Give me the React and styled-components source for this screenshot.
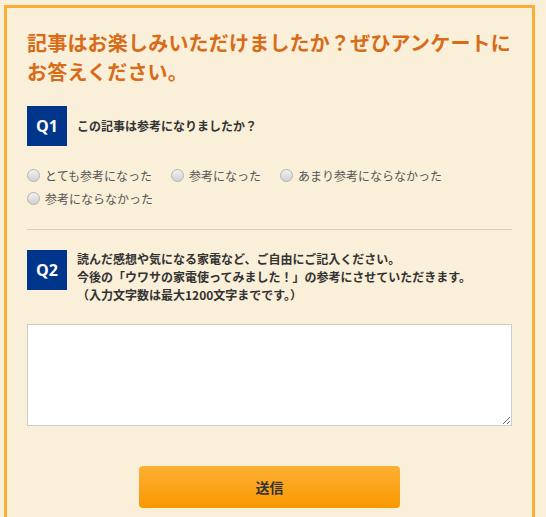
import React from "react";
import styled, { createGlobalStyle } from "styled-components";

const GlobalStyle = createGlobalStyle`
  html, body {
    margin: 0;
    padding: 0;
    background: #faefd8;
  }
  body {
    font-family: "Noto Sans CJK JP", "Noto Sans", sans-serif;
    color: #333;
  }
`;

const Page = styled.div`
  padding: 5px 0 0 4px;
`;

const Card = styled.div`
  width: 485px;
  border: 3px solid #fbad36;
  border-bottom: none;
  padding: 20px 20px 30px;
  background: #faefd8;
`;

const Title = styled.h2`
  margin: 0;
  font-size: 20px;
  line-height: 29px;
  font-weight: 700;
  color: #d86b17;
  letter-spacing: 0.2px;
`;

const QuestionRow = styled.div`
  display: flex;
  align-items: ${(p) => (p.$top ? "flex-start" : "center")};
  gap: 10px;
  margin-top: ${(p) => p.$mt || 0}px;
`;

const Badge = styled.div`
  flex: none;
  width: 40px;
  height: 40px;
  background: #00358c;
  color: #fff;
  display: flex;
  align-items: center;
  justify-content: center;
  font-family: "Open Sans", "Noto Sans", sans-serif;
  font-weight: 700;
  font-size: 16px;
`;

const QuestionText = styled.p`
  margin: 0;
  font-size: 12px;
  line-height: 18px;
  font-weight: 700;
  color: #333;
`;

const Options = styled.div`
  margin-top: 18px;
  display: flex;
  flex-wrap: wrap;
  column-gap: 19px;
`;

const Option = styled.label`
  display: flex;
  align-items: center;
  height: 23px;
  font-size: 12px;
  color: #555;
`;

const Radio = styled.input.attrs({ type: "radio" })`
  appearance: none;
  margin: 0 5px 0 0;
  width: 13px;
  height: 13px;
  border-radius: 50%;
  border: 1px solid #b4b4b4;
  background: linear-gradient(#f2f2f2, #d0d0d0);
  box-sizing: border-box;
`;

const Break = styled.div`
  flex-basis: 100%;
  height: 0;
`;

const Divider = styled.hr`
  margin: 19px 0 20px;
  border: none;
  border-top: 1px solid #d6d0c4;
`;

const Answer = styled.textarea`
  display: block;
  margin-top: 20px;
  width: 485px;
  height: 102px;
  box-sizing: border-box;
  border: 1px solid #cccccc;
  background: #fff;
  font-family: inherit;
`;

const Submit = styled.button`
  display: block;
  margin: 40px auto 0;
  width: 261px;
  height: 42px;
  border: none;
  border-radius: 4px;
  background: linear-gradient(#fdb034, #f99801);
  color: #333;
  font-family: inherit;
  font-size: 14px;
  font-weight: 700;
`;

const options = [
  "とても参考になった",
  "参考になった",
  "あまり参考にならなかった",
];

export default function App() {
  return (
    <Page>
      <GlobalStyle />
      <Card>
        <Title>
          記事はお楽しみいただけましたか？ぜひアンケートに
          <br />
          お答えください。
        </Title>

        <QuestionRow $mt={20}>
          <Badge>Q1</Badge>
          <QuestionText>この記事は参考になりましたか？</QuestionText>
        </QuestionRow>

        <Options>
          {options.map((o) => (
            <Option key={o}>
              <Radio name="q1" />
              {o}
            </Option>
          ))}
          <Break />
          <Option>
            <Radio name="q1" />
            参考にならなかった
          </Option>
        </Options>

        <Divider />

        <QuestionRow $top>
          <Badge>Q2</Badge>
          <QuestionText>
            読んだ感想や気になる家電など、ご自由にご記入ください。
            <br />
            今後の「ウワサの家電使ってみました！」の参考にさせていただきます。
            <br />
            （入力文字数は最大1200文字までです。）
          </QuestionText>
        </QuestionRow>

        <Answer />

        <Submit>送信</Submit>
      </Card>
    </Page>
  );
}
